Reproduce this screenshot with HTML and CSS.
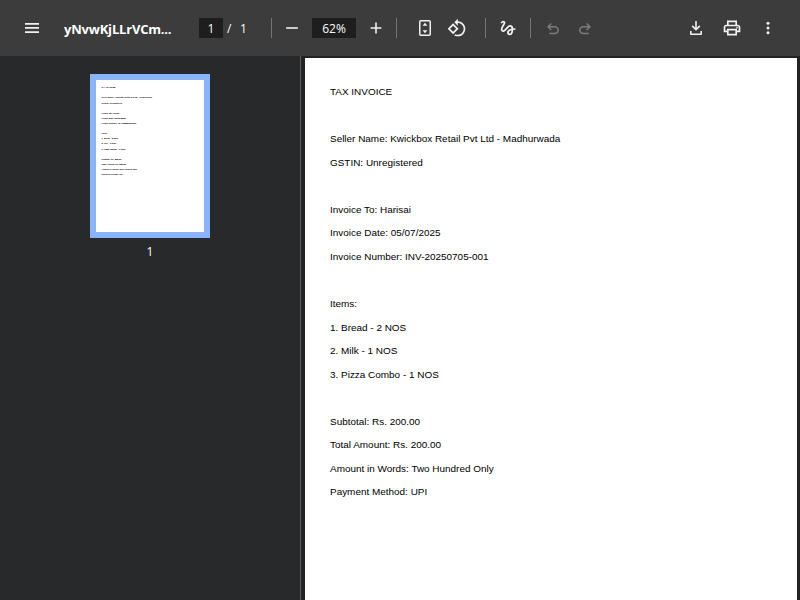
FILE: index.html
```html
<!DOCTYPE html>
<html lang="en">
<head>
<meta charset="utf-8">
<title>Tax Invoice</title>
<link rel="stylesheet" href="styles.css">
</head>
<body>
<header class="toolbar">
  <div class="start">
    <svg class="icon menu" viewBox="0 0 20 20"><path d="M3 5h14v1.7H3zM3 9.1h14v1.7H3zM3 13.2h14v1.7H3z"/></svg>
    <span class="title">yNvwKjLLrVCm...</span>
  </div>
  <div class="center">
    <span class="field page-field">1</span><span class="slash">/</span><span class="total">1</span>
    <i class="divider d1"></i>
    <svg class="icon minus" viewBox="0 0 20 20"><path d="M4.2 9.2h11.6v1.6H4.2z"/></svg>
    <span class="field zoom-field">62%</span>
    <svg class="icon plus" viewBox="0 0 20 20"><path d="M9.2 4.6h1.6v4.6h4.6v1.6h-4.6v4.6H9.2v-4.6H4.6V9.2h4.6z"/></svg>
    <i class="divider d2"></i>
    <svg class="icon fit" viewBox="0 0 20 20"><rect class="line" x="4.75" y="2.75" width="10.5" height="14.5" rx="1"/><path d="M10 4.800l2.400 3H7.600zM10 15.200l2.400-3H7.600z"/></svg>
    <svg class="icon rotate" viewBox="0 0 24 24"><path d="M7.34 6.41L.86 12.9l6.49 6.48 6.49-6.48-6.5-6.49zM3.69 12.9l3.66-3.66L11 12.9l-3.66 3.66-3.65-3.66zm15.67-6.26C17.61 4.88 15.3 4 13 4V.76L8.76 5 13 9.24V6c1.79 0 3.58.68 4.95 2.05 2.73 2.73 2.73 7.17 0 9.9C16.58 19.32 14.79 20 13 20c-.97 0-1.94-.21-2.84-.61l-1.49 1.49C10.02 21.620 11.510 22 13 22c2.3 0 4.610-.88 6.360-2.640 3.520-3.510 3.520-9.210 0-12.720z"/></svg>
    <i class="divider d3"></i>
    <svg class="icon draw" viewBox="0 0 24 24"><path class="line" d="M3.700 6C5 4.700 5.700 4.300 6.400 4.300C7.300 4.300 8 5 7.700 6.200C7.300 8 4.400 10.800 4.400 13.500C4.400 15 5.400 16 6.700 15.800C8.900 15.400 11.500 9.500 14.500 9.500C16.500 9.500 17.300 10.700 17.300 12.900C17.300 17.500 15.500 19.700 13.900 19.700C12.700 19.700 11.900 18.900 11.900 17.800C11.900 15.700 14.500 13.300 21 13.200"/></svg>
    <i class="divider d4"></i>
    <svg class="icon undo off" viewBox="0 -960 960 960"><path d="M280-200v-80h284q63 0 109.500-40T720-420q0-60-46.500-100T564-560H312l104 104-56 56-200-200 200-200 56 56-104 104h252q97 0 167 63t70 157q0 94-70 157t-167 63H280Z"/></svg>
    <svg class="icon redo off" viewBox="0 -960 960 960"><path d="M396-200q-97 0-167-63t-70-157q0-94 70-157t167-63h252L544-744l56-56 200 200-200 200-56-56 104-104H396q-63 0-109.500 40T240-420q0 60 46.500 100T396-280h284v80H396Z"/></svg>
  </div>
  <div class="end">
    <svg class="icon" viewBox="0 0 20 20"><path d="M9.200 3h1.600v6.800l2.500-2.500 1.100 1.100L10 12.800 5.600 8.400l1.100-1.100 2.500 2.500zM4 13h1.600v2.400h8.800V13H16v3q0 1-1 1H5q-1 0-1-1z"/></svg>
    <svg class="icon" viewBox="0 -960 960 960"><path d="M640-640v-120H320v120h-80v-200h480v200h-80Zm80 180q17 0 28.500-11.500T760-500q0-17-11.500-28.500T720-540q-17 0-28.500 11.500T680-500q0 17 11.500 28.500T720-460Zm-80 260v-160H320v160h320Zm80 80H240v-160H80v-240q0-51 35-85.500t85-34.500h560q51 0 85.500 34.500T880-520v240H720v160Zm80-240v-160q0-17-11.500-28.500T760-560H200q-17 0-28.500 11.500T160-520v160h80v-80h480v80h80Z"/></svg>
    <svg class="icon" viewBox="0 0 20 20"><circle cx="10" cy="5.200" r="1.500"/><circle cx="10" cy="10" r="1.500"/><circle cx="10" cy="14.800" r="1.500"/></svg>
  </div>
</header>
<main class="viewer">
  <aside class="sidebar">
    <div class="thumb">
      <p>TAX INVOICE</p><p></p><p>Seller Name: Kwickbox Retail Pvt Ltd - Madhurwada</p><p>GSTIN: Unregistered</p><p></p><p>Invoice To: Harisai</p><p>Invoice Date: 05/07/2025</p><p>Invoice Number: INV-20250705-001</p><p></p><p>Items:</p><p>1. Bread - 2 NOS</p><p>2. Milk - 1 NOS</p><p>3. Pizza Combo - 1 NOS</p><p></p><p>Subtotal: Rs. 200.00</p><p>Total Amount: Rs. 200.00</p><p>Amount in Words: Two Hundred Only</p><p>Payment Method: UPI</p>
    </div>
    <span class="thumb-label">1</span>
  </aside>
  <section class="content">
    <article class="page">
      <p>TAX INVOICE</p><p></p><p>Seller Name: Kwickbox Retail Pvt Ltd - Madhurwada</p><p>GSTIN: Unregistered</p><p></p><p>Invoice To: Harisai</p><p>Invoice Date: 05/07/2025</p><p>Invoice Number: INV-20250705-001</p><p></p><p>Items:</p><p>1. Bread - 2 NOS</p><p>2. Milk - 1 NOS</p><p>3. Pizza Combo - 1 NOS</p><p></p><p>Subtotal: Rs. 200.00</p><p>Total Amount: Rs. 200.00</p><p>Amount in Words: Two Hundred Only</p><p>Payment Method: UPI</p>
    </article>
  </section>
</main>
</body>
</html>
```
FILE: styles.css
```css
* { box-sizing: border-box; }
body {
  margin: 0;
  height: 600px;
  overflow: hidden;
  display: flex;
  flex-direction: column;
  background: #28292a;
  color: #fff;
  font-family: "Open Sans", "Noto Sans", sans-serif;
}
p { margin: 0; white-space: nowrap; }
.toolbar {
  flex: none;
  height: 56px;
  display: flex;
  align-items: center;
  background: #3c3c3c;
}
.start, .center, .end { display: flex; align-items: center; }
.start { width: 199px; padding-left: 22px; }
.center { flex: 1; font-size: 12px; }
.end { gap: 16px; padding-right: 22px; }
.icon { flex: none; width: 20px; height: 20px; fill: #f1f1f1; }
.line { fill: none; stroke: #f1f1f1; stroke-width: 1.5; }
.draw .line { stroke-width: 2.1; }
.off { fill: #7c7c7c; }
.title {
  margin: 2px 0 0 22px;
  font-size: 13px;
  font-weight: 700;
  letter-spacing: -0.2px;
  white-space: nowrap;
}
.field {
  height: 20px;
  line-height: 21px;
  text-align: center;
  background: #1e1e1e;
}
.page-field { width: 24px; }
.slash { width: 5px; margin-left: 4px; }
.total { width: 7px; margin-left: 8px; }
.divider { width: 1px; height: 20px; background: #767676; }
.d1 { margin-left: 24px; }
.minus { margin-left: 10px; }
.zoom-field { width: 44px; margin-left: 10px; }
.plus { margin-left: 10px; }
.d2 { margin-left: 10px; }
.fit { margin-left: 18px; }
.rotate { margin-left: 12px; }
.d3 { margin-left: 18px; }
.draw { margin-left: 12px; }
.d4 { margin-left: 12px; }
.undo, .redo { width: 18px; height: 18px; margin-top: 1px; }
.undo { margin-left: 13px; }
.redo { margin-left: 14px; }
.viewer { flex: 1; display: flex; min-height: 0; }
.sidebar {
  width: 301px;
  display: flex;
  flex-direction: column;
  align-items: center;
  padding: 18px 0 0;
  border-right: 1px solid #5c5c5c;
}
.thumb {
  width: 120px;
  height: 164px;
  border: 6px solid #8ab4f8;
  padding: 5.200px 0 0 5.600px;
  background: #fff;
  color: #000;
  font: 2.180px/5.120px "Liberation Sans", sans-serif;
  -webkit-text-stroke: 0.040px #000;
}
.thumb p { height: 5.120px; }
.thumb-label { margin-top: 5px; font-size: 12px; line-height: 18px; }
.content { flex: 1; padding: 2px 3px 0 4px; background: #232323; }
.page {
  height: 100%;
  padding: 22.050px 0 0 25px;
  background: #fff;
  color: #000;
  font: 9.950px/23.550px "Liberation Sans", sans-serif;
}
.page p { height: 23.550px; }
```
